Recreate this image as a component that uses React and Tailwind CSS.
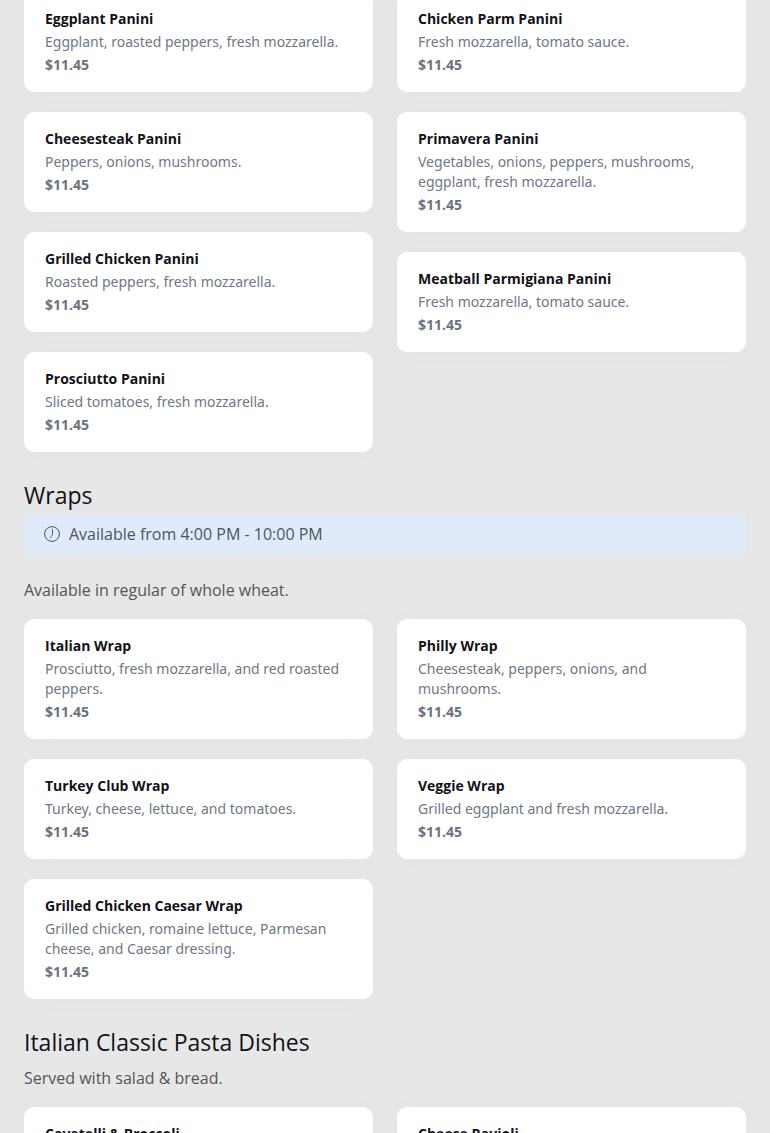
import React from "react";

const paniniLeft = [
  { name: "Eggplant Panini", desc: "Eggplant, roasted peppers, fresh mozzarella.", price: "$11.45" },
  { name: "Cheesesteak Panini", desc: "Peppers, onions, mushrooms.", price: "$11.45" },
  { name: "Grilled Chicken Panini", desc: "Roasted peppers, fresh mozzarella.", price: "$11.45" },
  { name: "Prosciutto Panini", desc: "Sliced tomatoes, fresh mozzarella.", price: "$11.45" },
];

const paniniRight = [
  { name: "Chicken Parm Panini", desc: "Fresh mozzarella, tomato sauce.", price: "$11.45" },
  {
    name: "Primavera Panini",
    desc: "Vegetables, onions, peppers, mushrooms, eggplant, fresh mozzarella.",
    price: "$11.45",
  },
  { name: "Meatball Parmigiana Panini", desc: "Fresh mozzarella, tomato sauce.", price: "$11.45" },
];

const wrapsLeft = [
  {
    name: "Italian Wrap",
    desc: "Prosciutto, fresh mozzarella, and red roasted peppers.",
    price: "$11.45",
  },
  { name: "Turkey Club Wrap", desc: "Turkey, cheese, lettuce, and tomatoes.", price: "$11.45" },
  {
    name: "Grilled Chicken Caesar Wrap",
    desc: "Grilled chicken, romaine lettuce, Parmesan cheese, and Caesar dressing.",
    price: "$11.45",
  },
];

const wrapsRight = [
  { name: "Philly Wrap", desc: "Cheesesteak, peppers, onions, and mushrooms.", price: "$11.45" },
  { name: "Veggie Wrap", desc: "Grilled eggplant and fresh mozzarella.", price: "$11.45" },
];

const pastaLeft = [{ name: "Cavatelli & Broccoli" }];
const pastaRight = [{ name: "Cheese Ravioli" }];

function MenuItem({ item }) {
  return (
    <li className="flex flex-col gap-[3px] rounded-[10px] border border-white bg-white px-5 py-4 text-sm/5 shadow-[0_0_30px_rgba(0,0,0,0.02)]">
      <h3 className="font-bold text-[#131118]">{item.name}</h3>
      {item.desc && <p className="font-['Noto_Sans',sans-serif] text-[#6f7786]">{item.desc}</p>}
      {item.price && <p className="font-bold text-[#6b7280]">{item.price}</p>}
    </li>
  );
}

function MenuColumns({ left, right }) {
  return (
    <div className="grid grid-cols-2 items-start gap-6">
      {[left, right].map((items, i) => (
        <ul key={i} className="flex flex-col gap-5">
          {items.map((item) => (
            <MenuItem key={item.name} item={item} />
          ))}
        </ul>
      ))}
    </div>
  );
}

function ClockIcon() {
  return (
    <svg className="size-4" viewBox="0 0 16 16" fill="none" stroke="currentColor" aria-hidden="true">
      <circle cx="8" cy="8" r="7.4" strokeWidth="1" />
      <path d="M8.5 3v5.4L6.2 12" strokeWidth="0.9" />
    </svg>
  );
}

function App() {
  return (
    <main className="h-screen overflow-y-auto bg-[#e7e7e7] px-6 font-['Open_Sans',sans-serif] [scrollbar-width:none]">
      <section className="-mt-2">
        <MenuColumns left={paniniLeft} right={paniniRight} />
      </section>

      <section className="mt-[27px]">
        <h2 className="text-[23px]/8 font-medium text-[#131118]">Wraps</h2>
        <div className="mt-[3px] mb-6 flex items-center gap-[9px] bg-[#e0ebfa] px-5 py-2 text-base/6 text-[#4b5563]">
          <ClockIcon />
          <span>Available from 4:00 PM - 10:00 PM</span>
        </div>
        <p className="mb-[17px] text-base/6 text-[#555]">Available in regular of whole wheat.</p>
        <MenuColumns left={wrapsLeft} right={wrapsRight} />
      </section>

      <section className="mt-[27px]">
        <h2 className="text-[23px]/8 font-medium text-[#131118]">Italian Classic Pasta Dishes</h2>
        <p className="mt-2 mb-[17px] text-base/6 text-[#555]">Served with salad &amp; bread.</p>
        <MenuColumns left={pastaLeft} right={pastaRight} />
      </section>
    </main>
  );
}

export default App;
